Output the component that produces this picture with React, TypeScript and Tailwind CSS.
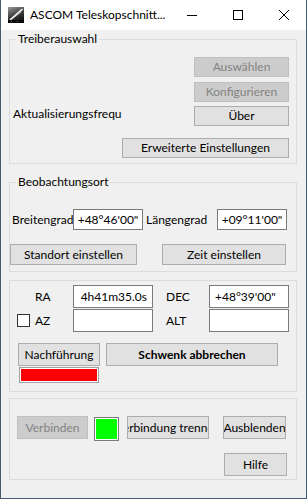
import React from 'react'

const btn = "flex items-center justify-center overflow-hidden whitespace-nowrap border bg-[#e1e1e1] border-[#adadad] text-black"
const btnOff = "flex items-center justify-center overflow-hidden whitespace-nowrap border bg-[#cccccc] border-[#bfbfbf] text-[#838383]"
const box = "flex items-center border border-[#7a7a7a] bg-white whitespace-nowrap"

const Group = ({ title, className, children }: { title?: string; className?: string; children: React.ReactNode }) => (
  <fieldset className={`w-[288px] border border-[#dcdcdc] ${className ?? ''}`}>
    {title && <legend className="ml-[6px] px-[2px] leading-[16px]">{title}</legend>}
    {children}
  </fieldset>
)

const AppIcon = () => (
  <svg width="16" height="16" viewBox="0 0 16 16">
    <defs>
      <linearGradient id="sky" x1="0" y1="0" x2="0.4" y2="1">
        <stop offset="0" stopColor="#9a9a9a" />
        <stop offset="0.6" stopColor="#3c3c3c" />
        <stop offset="1" stopColor="#151515" />
      </linearGradient>
    </defs>
    <rect width="16" height="16" fill="url(#sky)" />
    <path d="M2.5 12.5 Q7 8.5 14 2.5" stroke="#ffffff" strokeWidth="1.6" fill="none" strokeLinecap="round" />
    <path d="M4 12 Q8 9 13 5" stroke="#cfcfcf" strokeWidth="0.8" fill="none" />
    <rect y="13" width="16" height="3" fill="#0a0a0a" />
    <rect x="3" y="14" width="1" height="1" fill="#777" />
    <rect x="9" y="14" width="1" height="1" fill="#666" />
  </svg>
)

export default function App() {
  return (
    <div className="w-[307px] h-[499px] flex flex-col border-x border-b border-[#435b73] bg-[#f0f0f0] text-[12px] leading-[16px] text-black font-['Lato','Noto_Sans',sans-serif]">
      {/* title bar */}
      <div className="h-[30px] flex items-center bg-white">
        <div className="pl-[7px]"><AppIcon /></div>
        <span className="ml-[6px] flex-1 text-[12px]">ASCOM Teleskopschnitt...</span>
        <div className="w-[46px] h-full flex items-center justify-center">
          <svg width="10" height="10" viewBox="0 0 10 10"><path d="M0 5.5H10" stroke="#000" strokeWidth="1" /></svg>
        </div>
        <div className="w-[46px] h-full flex items-center justify-center">
          <svg width="10" height="10" viewBox="0 0 10 10"><rect x="0.5" y="0.5" width="9" height="9" stroke="#000" strokeWidth="1" fill="none" /></svg>
        </div>
        <div className="w-[45px] h-full flex items-center justify-center">
          <svg width="10" height="10" viewBox="0 0 10 10"><path d="M0 0L10 10M10 0L0 10" stroke="#000" strokeWidth="1" /></svg>
        </div>
      </div>

      <div className="flex flex-col pl-[8px]">
        {/* Treiberauswahl */}
        <Group title="Treiberauswahl" className="mt-[1px] pb-[5px]">
          <div className="flex flex-col items-end pr-[7px]">
            <div className={`${btnOff} mt-[10px] w-[95px] h-[20px]`}>Auswählen</div>
            <div className={`${btnOff} mt-[5px] w-[95px] h-[20px]`}>Konfigurieren</div>
            <div className="mt-[4px] w-full flex items-start justify-between">
              <span className="pl-[3px]">Aktualisierungsfrequ</span>
              <div className={`${btn} w-[95px] h-[20px]`}>Über</div>
            </div>
            <div className={`${btn} mt-[12px] w-[167px] h-[20px]`}>Erweiterte Einstellungen</div>
          </div>
        </Group>

        {/* Beobachtungsort */}
        <Group title="Beobachtungsort" className="mt-[10px] pb-[6px]">
          <div className="mt-[19px] flex items-center pl-[2px]">
            <span className="w-[61px]">Breitengrad</span>
            <div className={`${box} justify-center w-[70px] h-[21px]`}>+48°46'00"</div>
            <span className="w-[74px] pl-[3px]">Längengrad</span>
            <div className={`${box} justify-center w-[70px] h-[21px]`}>+09°11'00"</div>
          </div>
          <div className="mt-[14px] flex items-center">
            <div className={`${btn} w-[127px] h-[21px]`}>Standort einstellen</div>
            <div className={`${btn} ml-[25px] w-[124px] h-[21px]`}>Zeit einstellen</div>
          </div>
        </Group>

        {/* Koordinaten */}
        <Group className="mt-[8px] pb-[8px]">
          <div className="mt-[4px] flex items-center">
            <span className="w-[63px] pl-[25px]">RA</span>
            <div className={`${box} justify-end pr-[5px] w-[80px] h-[23px]`}>4h41m35.0s</div>
            <span className="w-[56px] pl-[13px]">DEC</span>
            <div className={`${box} pl-[5px] w-[80px] h-[23px]`}>+48°39'00"</div>
          </div>
          <div className="mt-[1px] flex items-center">
            <div className="w-[63px] pl-[7px] flex items-center">
              <div className="w-[13px] h-[13px] border border-[#333333] bg-white" />
              <span className="ml-[5px]">AZ</span>
            </div>
            <div className={`${box} w-[80px] h-[23px]`} />
            <span className="w-[56px] pl-[13px]">ALT</span>
            <div className={`${box} w-[80px] h-[23px]`} />
          </div>
          <div className="mt-[11px] flex items-center pl-[8px]">
            <div className={`${btn} w-[82px] h-[23px]`}>Nachführung</div>
            <div className={`${btn} ml-[6px] w-[172px] h-[23px] font-bold`}>Schwenk abbrechen</div>
          </div>
          <div className="mt-[1px] ml-[9px] w-[80px] h-[16px] border border-[#a0a0a0] bg-white p-[1px]">
            <div className="w-full h-full bg-[#ff0000]" />
          </div>
        </Group>

        {/* Verbindung */}
        <Group className="mt-[6px] pb-[3px]">
          <div className="mt-[17px] flex items-start pl-[7px]">
            <div className={`${btnOff} w-[71px] h-[23px]`}>Verbinden</div>
            <div className="ml-[6px] mt-[1px] w-[25px] h-[24px] border border-[#7a7a7a] bg-white p-[1px]">
              <div className="w-full h-full bg-[#00ff00]" />
            </div>
            <div className={`${btn} ml-[8px] w-[82px] h-[23px]`}>Verbindung trennen</div>
            <div className={`${btn} ml-[14px] w-[63px] h-[23px]`}>Ausblenden</div>
          </div>
          <div className="mt-[12px] flex justify-end pr-[9px]">
            <div className={`${btn} w-[63px] h-[23px]`}>Hilfe</div>
          </div>
        </Group>
      </div>
    </div>
  )
}
